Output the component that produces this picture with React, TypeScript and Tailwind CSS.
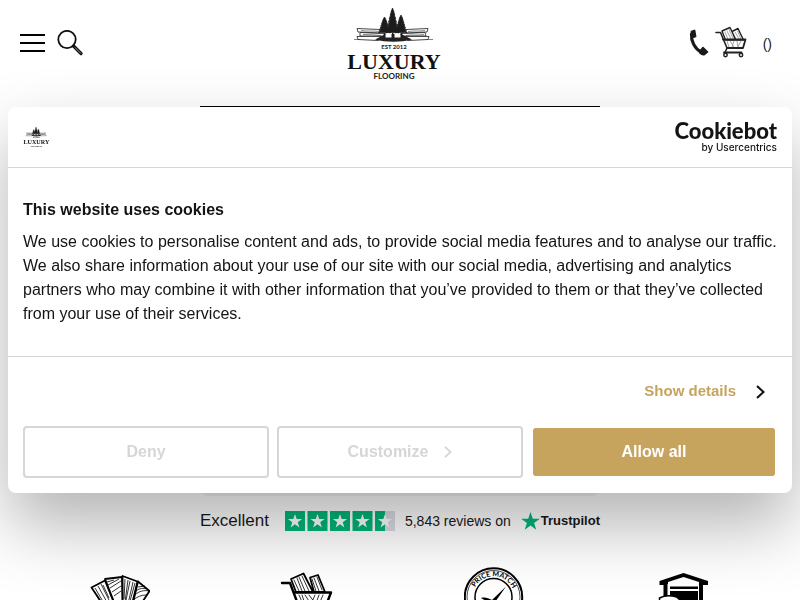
function Tree({ x, y, height, width }: { x: number; y: number; height: number; width: number }) {
  const rows = 7;
  const left: string[] = [];
  const right: string[] = [];
  for (let i = 1; i <= rows; i++) {
    const w = (width / 2) * Math.pow(i / rows, 0.8);
    const py = y + (height * i) / rows;
    right.push(`${x + w},${py}`, `${x + w * 0.7},${py - 0.5}`);
    left.unshift(`${x - w * 0.7},${py - 0.5}`, `${x - w},${py}`);
  }
  return (
    <polygon points={[`${x},${y}`, ...right, ...left].join(' ')} fill="#1c1c1c" stroke="#1c1c1c" strokeWidth="0.7" />
  );
}

function Logo({ className }: { className: string }) {
  return (
    <svg viewBox="0 0 100 72" className={className} role="img" aria-label="Luxury Flooring">
      <g fill="#fff" stroke="#333" strokeWidth="0.9">
        <path d="M11 20.500 34 21.500v3.500l-22-1zM82 20.500 60 21.500v3.500l21-1zM14 24.500l24 1v3l-24-.5zM79 24.500l-23 1v3l24-.5zM11 28.500l28-.5-7 4.500-20-1zM83 28.500l-28-.5 7 4.500 20-1z" />
        <path d="M8 31.500h6M81 31.500h6M15 22.500c6 1 12 0 18 1M62 23.500c6-1 12 0 17-1M17 26.500c7 0 12 .5 18 1M60 27.500c6-1 13 0 18-1" fill="none" strokeWidth="0.600" />
      </g>
      <path d="M29 31.500l11-5.500h15l11 5.500c-11 3-26 3-37 0z" fill="#222" />
      <path d="M39.500 26h6v3.500h-7zM48.500 26h6l1 3.500h-7z" fill="#fff" />
      <Tree x={38.500} y={9} height={16} width={12} />
      <Tree x={55} y={7} height={18} width={12} />
      <Tree x={46.500} y={0} height={25} width={13} />
      <path d="M38 25h1.500v5H38zM46 25h1.500v6H46zM54.500 25H56v5h-1.500z" fill="#1c1c1c" />
      <text x="48" y="41" textAnchor="middle" fontSize="6" fontWeight="700" fill="#222" className="font-['Lato',sans-serif]">EST 2012</text>
      <text x="48" y="61" textAnchor="middle" fontSize="22" fontWeight="700" fill="#111" className="font-['Liberation_Serif',serif]">LUXURY</text>
      <text x="48" y="71" textAnchor="middle" fontSize="8" fontWeight="700" fill="#222" className="font-['Lato',sans-serif]">FLOORING</text>
    </svg>
  );
}

function Chevron({ className }: { className: string }) {
  return (
    <svg viewBox="0 0 9 14" className={className} fill="none" stroke="currentColor" strokeWidth="2.200">
      <path d="M1 1l6.500 6L1 13" />
    </svg>
  );
}

function SearchIcon() {
  return (
    <svg viewBox="0 0 26 26" className="size-[26px]" fill="none" stroke="#111">
      <circle cx="10" cy="9.500" r="8.700" strokeWidth="1.800" />
      <path d="M16.500 16l7.500 7.500" strokeWidth="3.200" strokeLinecap="round" />
      <path d="M18 17.500l6 6" stroke="#aaa" strokeWidth="0.900" />
    </svg>
  );
}

function PhoneIcon() {
  return (
    <svg viewBox="0 0 20 27" className="h-[27px] w-5" fill="none" stroke="#1a1a1a" strokeLinecap="round" strokeLinejoin="round">
      <path d="M2.500 5c-.5 7 3 14.500 10 18.500" strokeWidth="3.200" />
      <path d="M2.500 2.500 5.500 1.500 6.500 7.500 3.500 8.500z" fill="#1a1a1a" strokeWidth="1.800" />
      <path d="M11.500 21.500l2.500-3 4.500 4.500-3 2.500c-1.500.5-3 0-4.500-1.500z" fill="#1a1a1a" strokeWidth="1.600" />
    </svg>
  );
}

function TrolleyIcon() {
  return (
    <svg viewBox="0 0 32 32" className="size-8" fill="none" stroke="#222" strokeLinecap="round" strokeLinejoin="round">
      <path d="M7 5 15 1.500l6 12.500H10.500zM17 5.500l6-3 5.500 11.500h-8z" fill="#fff" strokeWidth="1.400" />
      <path
        d="M10 6l3 7M12 5l4 8M14 3.500l4 9M20 6l4 7M22.500 5l3.500 8M12 15l2 6M15 15l4 6M19 15l-2 6M22 15l1 6M26 15l-3 6"
        stroke="#999"
        strokeWidth="0.900"
      />
      <path d="M1 6.500h4.500L12 22l-2 4.500" strokeWidth="1.600" />
      <path d="M8 13.500h22.500L28 22H12M9 26.500h17.500" strokeWidth="1.800" />
      <circle cx="10.500" cy="29" r="1.700" fill="#fff" strokeWidth="1.500" />
      <circle cx="26" cy="29" r="1.700" fill="#fff" strokeWidth="1.500" />
    </svg>
  );
}

function SamplesIcon() {
  return (
    <svg viewBox="0 0 60 60" className="size-[60px]" fill="#fff" stroke="#000" strokeWidth="1.800" strokeLinejoin="round">
      <path d="M1.500 20.500 15 13.500l17 42-5 3z" />
      <path d="M15 12l17-2 1 48z" />
      <path d="M32.500 9l15 5.500L37 58h-4z" />
      <path d="M48 14.500 59.500 24 38 57z" />
      <path
        d="M5 21l13 22M8 19l15 27M11 17l14 28M4 24l8 14M13 18l6 13M17 15l7-2M18 18l11-6M20 21l11-7M22 25l9-6M24 29l7-5M35 12l-1 20M38 13l-3 22M40 14l-5 24M43 15l-5 22M45 16l-5 18M48 20l7-1M46 24c4-3 7-3 11-2M45 28c4-4 9-5 14-4M43 33c4-3 8-5 13-5"
        fill="none"
        strokeWidth="0.800"
      />
    </svg>
  );
}

function TrolleyLargeIcon() {
  return (
    <svg viewBox="0 0 60 60" className="size-[60px]" fill="none" stroke="#000" strokeLinecap="round" strokeLinejoin="round">
      <path d="M14 12 26.500 6.500 36 25H19zM33 10.500 41 8l7 17H37z" fill="#fff" strokeWidth="1.800" />
      <path
        d="M17 13l5 11M20 11l5 13M22 10l6 14M25 9l7 15M35 12l4 12M37 11l5 13M40 10l5 13M22 28l4 9M25 28l3 9M28 28l6 9M32 28l6 8M38 28l-4 9M42 28l-3 8M46 28l-4 9"
        strokeWidth="0.800"
      />
      <path d="M5 16h8l12 32h24" strokeWidth="2.400" />
      <path d="M17 25.500h37L48 41H23" strokeWidth="2.400" />
      <circle cx="27" cy="54" r="3" strokeWidth="2" />
      <circle cx="46" cy="54" r="3" strokeWidth="2" />
    </svg>
  );
}

function PriceMatchIcon() {
  return (
    <svg viewBox="0 0 60 60" className="size-[60px]" fill="none" stroke="#000">
      <circle cx="29.500" cy="30" r="28.700" strokeWidth="2" />
      <circle cx="29.500" cy="30" r="26.500" strokeWidth="0.700" />
      <circle cx="29.500" cy="30" r="18.500" strokeWidth="1.500" />
      <path id="price-arc" d="M8.700 30a20.800 20.800 0 0 1 41.600 0" stroke="none" />
      <text fontSize="7" fontWeight="700" fill="#000" stroke="none" textAnchor="middle" className="font-['Lato',sans-serif]">
        <textPath href="#price-arc" startOffset="51%">PRICE MATCH</textPath>
      </text>
      <path d="M17 31c4-1 7 0 11 2L42 19.500 29 38z" fill="#000" stroke="none" />
    </svg>
  );
}

function WarehouseIcon() {
  return (
    <svg viewBox="0 0 60 60" className="size-[60px]">
      <path d="M32.500 6 57 14v4h-5v38h-4V17H16.500v39h-4V18h-4v-4z" />
      <path d="M17 15l15.500-5L48 15v4H17z" fill="#fff" />
      <path d="M19 19.500h28V22H19zM19 24h28v14H19z" />
      <path d="M8.500 31c5-2.500 12-2.500 17-1l6 5v5h-23z" fill="#fff" stroke="#000" strokeWidth="1.500" />
    </svg>
  );
}

const starPath = 'M10 3l1.700 5.100h5.400l-4.400 3.200 1.700 5.200-4.400-3.200-4.400 3.200 1.700-5.200-4.400-3.200h5.400z';

function Stars() {
  return (
    <svg viewBox="0 0 110 20" className="h-5 w-[110px]" role="img" aria-label="4.5 out of 5 stars">
      {[0, 1, 2, 3, 4].map((i) => (
        <g key={i} transform={`translate(${i * 22.500} 0)`}>
          <path d="M0 0h20v20H0z" fill={i === 4 ? '#dcdce6' : '#00b67a'} />
          {i === 4 && <path d="M0 0h10v20H0z" fill="#00b67a" />}
          <path d={starPath} fill="#fff" />
        </g>
      ))}
    </svg>
  );
}

const usps = [
  { label: 'Free samples', icon: <SamplesIcon /> },
  { label: 'Delivery', icon: <TrolleyLargeIcon /> },
  { label: 'Price match', icon: <PriceMatchIcon /> },
  { label: 'Storage', icon: <WarehouseIcon /> },
];

function Header() {
  return (
    <header className="grid grid-cols-[1fr_auto_1fr] items-center py-2 pl-5 pr-7">
      <div className="flex items-center gap-3 pb-0.5">
        <button aria-label="Menu" className="flex w-[25px] flex-col gap-1.5">
          <span className="h-0.5 bg-black" />
          <span className="h-0.5 bg-black" />
          <span className="h-0.5 bg-black" />
        </button>
        <button aria-label="Search">
          <SearchIcon />
        </button>
      </div>
      <a href="#home">
        <Logo className="h-[72px] w-[100px]" />
      </a>
      <div className="flex items-center justify-end pb-1">
        <a href="#call" aria-label="Call us">
          <PhoneIcon />
        </a>
        <a href="#basket" className="ml-1.5 flex items-center gap-4 text-sm">
          <TrolleyIcon />
          <span className="pt-1">()</span>
        </a>
      </div>
    </header>
  );
}

function CookieDialog() {
  return (
    <div
      role="dialog"
      aria-labelledby="cookie-title"
      className="fixed inset-x-2 top-1/2 -translate-y-1/2 rounded-lg bg-white text-[#141414] shadow-[0_32px_68px_rgba(0,0,0,0.3)]"
    >
      <div className="flex h-[61px] items-center justify-between border-b border-[#d6d6d6] px-[15px]">
        <Logo className="h-5 w-7" />
        <a href="#cookiebot" className="flex flex-col items-end">
          <span className="font-['Lato',sans-serif] text-[22px] leading-5 font-black">Cookiebot</span>
          <span className="font-['Inter',sans-serif] text-[10px] leading-3 font-medium">by Usercentrics</span>
        </a>
      </div>
      <div className="border-b border-[#d6d6d6] px-[15px] py-[30px] leading-6">
        <h2 id="cookie-title" className="mb-2 font-bold">This website uses cookies</h2>
        <p>
          We use cookies to personalise content and ads, to provide social media features and to analyse our traffic. We
          also share information about your use of our site with our social media, advertising and analytics partners who
          may combine it with other information that you’ve provided to them or that they’ve collected from your use of
          their services.
        </p>
      </div>
      <div className="px-[15px] pb-[15px]">
        <div className="flex h-[69px] items-center justify-end pr-3">
          <button className="flex items-center gap-5 text-[15px] font-bold text-[#c7a45e]">
            Show details
            <Chevron className="h-3.5 w-[9px] text-[#141414]" />
          </button>
        </div>
        <div className="flex h-[52px] gap-2 font-bold">
          <button className="flex-1 rounded border-2 border-[#d6d6d6] text-[#d6d6d6]">Deny</button>
          <button className="flex flex-1 items-center justify-center gap-4 rounded border-2 border-[#d6d6d6] text-[#d6d6d6]">
            Customize
            <Chevron className="h-3 w-2" />
          </button>
          <button className="flex-1 rounded border-2 border-white bg-[#c7a45e] bg-clip-padding text-white">Allow all</button>
        </div>
      </div>
    </div>
  );
}

export default function App() {
  return (
    <div className="h-screen overflow-hidden bg-white font-['Liberation_Sans',Arial,sans-serif] text-[#191919]">
      <Header />
      <main>
        {/* Banner */}
        <section className="mx-auto mt-[18px] h-[390px] max-w-[400px] rounded-b-lg border-t border-black bg-[#f4f4f4]" />

        {/* Trustpilot */}
        <a href="#reviews" className="mx-auto mt-3 flex h-[26px] max-w-[400px] items-center gap-2.5">
          <span className="mr-auto text-[17px]">Excellent</span>
          <Stars />
          <span className="text-sm">5,843 reviews on</span>
          <span className="flex items-center gap-px text-[13px] font-bold">
            <svg viewBox="2.800 3 14.400 13.600" className="h-[18px] w-[19px]">
              <path d={starPath} fill="#00b67a" />
            </svg>
            Trustpilot
          </span>
        </a>

        {/* USPs */}
        <ul className="mt-[33px] grid grid-cols-4 px-[26px]">
          {usps.map((usp) => (
            <li key={usp.label} aria-label={usp.label} className="flex justify-center">
              {usp.icon}
            </li>
          ))}
        </ul>
      </main>
      <CookieDialog />
    </div>
  );
}
